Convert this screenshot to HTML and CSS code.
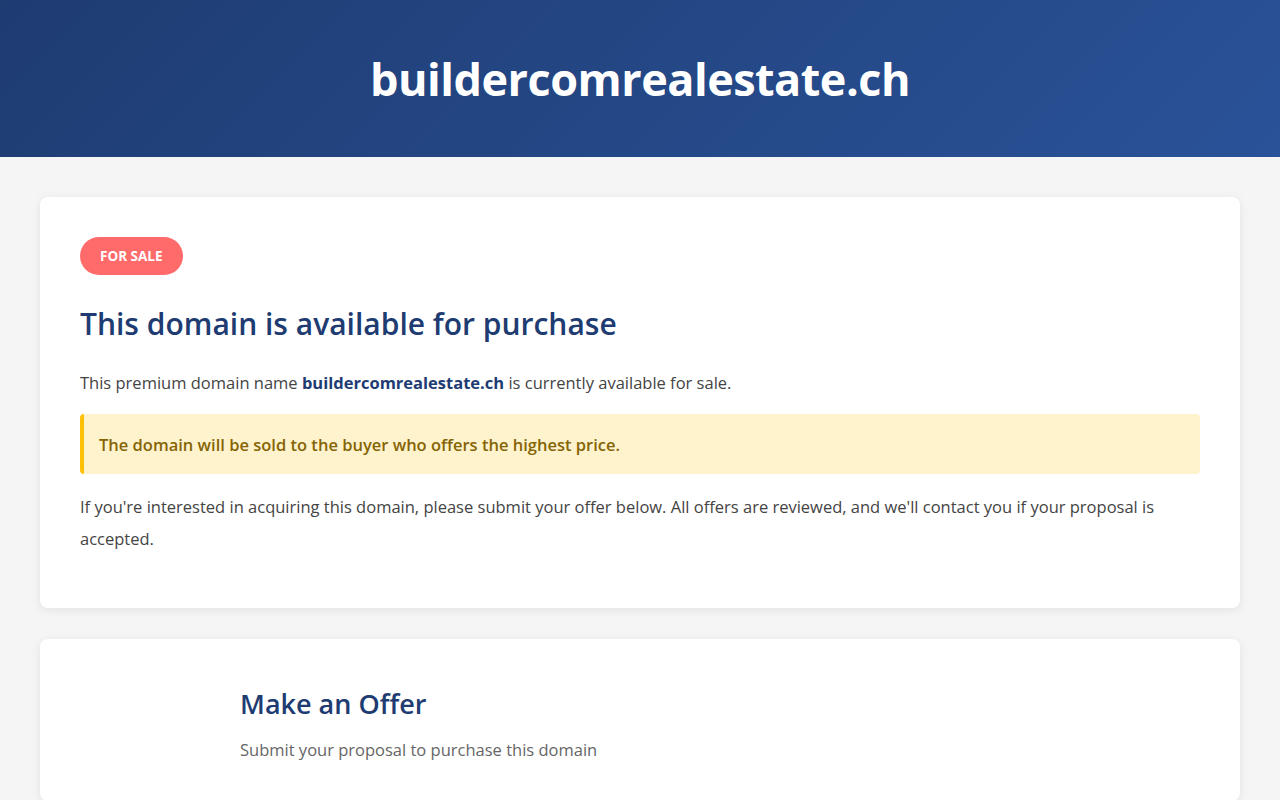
FILE: index.html
```html
<!DOCTYPE html>
<html lang="en">
<head>
<meta charset="utf-8">
<title>buildercomrealestate.ch</title>
<link rel="stylesheet" href="styles.css">
</head>
<body>
<header class="site-header">
  <h1 class="site-title">buildercomrealestate.ch</h1>
</header>
<main class="container">
  <section class="card">
    <span class="badge">For Sale</span>
    <h2 class="card-title">This domain is available for purchase</h2>
    <p class="text">This premium domain name <strong class="domain">buildercomrealestate.ch</strong> is currently available for sale.</p>
    <div class="notice">The domain will be sold to the buyer who offers the highest price.</div>
    <p class="text text-last">If you're interested in acquiring this domain, please submit your offer below. All offers are reviewed, and we'll contact you if your proposal is accepted.</p>
  </section>
  <section class="card">
    <div class="offer">
      <h2 class="offer-title">Make an Offer</h2>
      <p class="offer-sub">Submit your proposal to purchase this domain</p>
    </div>
  </section>
</main>
</body>
</html>
```

FILE: styles.css
```css
* { box-sizing: border-box; }
html, body { margin: 0; padding: 0; }
body {
  background: #f5f5f5;
  font-family: "Open Sans", "Noto Sans", sans-serif;
  color: #444;
}
.site-header {
  background: linear-gradient(135deg, #1e3c72 0%, #2a5298 100%);
  height: 157px;
  display: flex;
  align-items: center;
  justify-content: center;
}
.site-title {
  margin: 0;
  color: #fff;
  font-size: 45px;
  font-weight: 700;
  letter-spacing: -0.5px;
}
.container {
  max-width: 1280px;
  padding: 40px 40px;
  display: flex;
  flex-direction: column;
  gap: 31px;
}
.card {
  background: #fff;
  border-radius: 8px;
  box-shadow: 0 2px 10px rgba(0,0,0,0.08);
  padding: 40px;
}
.badge {
  display: inline-block;
  background: #ff6b6b;
  color: #fff;
  font-weight: 700;
  font-size: 13.5px;
  text-transform: uppercase;
  line-height: 38px;
  height: 38px;
  padding: 0 20px;
  border-radius: 20px;
}
.card-title {
  margin: 31px 0 25px;
  color: #1e3c72;
  font-size: 30px;
  font-weight: 600;
  line-height: 1.2;
}
.text {
  margin: 0;
  font-size: 16.5px;
  line-height: 32px;
}
.domain { color: #1e3c72; font-weight: 700; }
.notice {
  margin: 15px 0 17px;
  background: #fff3cd;
  border-left: 4px solid #ffc107;
  border-radius: 4px;
  color: #856404;
  font-weight: 600;
  font-size: 16.5px;
  height: 60px;
  display: flex;
  align-items: center;
  padding: 0 15px;
}
.text-last { margin-bottom: 13px; }
.offer {
  max-width: 800px;
  margin: 0 auto;
  padding-top: 9px;
}
.offer-title {
  margin: 0 0 18px;
  color: #1e3c72;
  font-size: 27px;
  font-weight: 600;
  line-height: 1.2;
}
.offer-sub {
  margin: 0;
  color: #666;
  font-size: 16.5px;
}
```
